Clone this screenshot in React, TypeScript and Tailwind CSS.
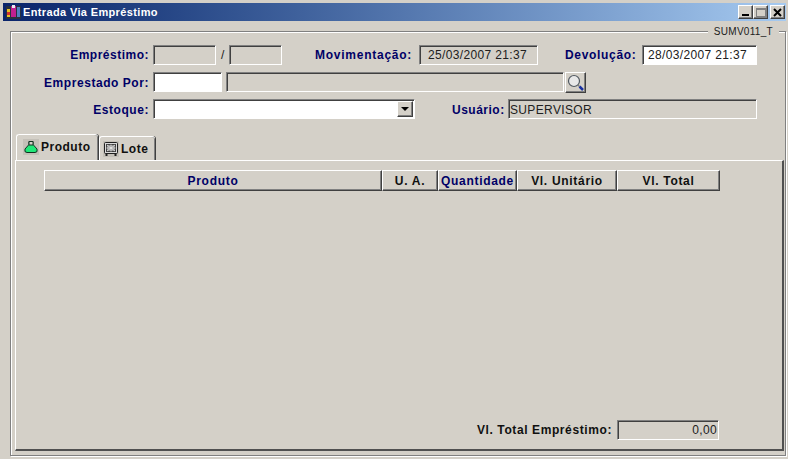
import React from "react";

const sunken =
  "border border-t-[#808080] border-l-[#808080] border-b-white border-r-white shadow-[inset_1px_1px_0_#404040]";
const raised =
  "border border-t-white border-l-white border-b-[#404040] border-r-[#404040] shadow-[inset_-1px_-1px_0_#808080]";

function Label({ width, children }: { width: string; children: React.ReactNode }) {
  return (
    <span className={`${width} shrink-0 whitespace-nowrap text-right text-[12px] font-bold leading-[14px] text-[#000066]`}>
      {children}
    </span>
  );
}

function Field({ className, children }: { className: string; children?: React.ReactNode }) {
  return (
    <div className={`${sunken} ${className} flex shrink-0 items-center overflow-hidden whitespace-nowrap pl-[3px] text-[12px] tracking-[0.35px] text-[#202020]`}>
      {children}
    </div>
  );
}

function HeaderCell({ width, blue, children }: { width: string; blue?: boolean; children: React.ReactNode }) {
  return (
    <div
      className={`${raised} ${width} flex h-[21px] shrink-0 items-center justify-center whitespace-nowrap text-[12px] font-bold tracking-[0.7px] ${
        blue ? "text-[#000066]" : "text-[#101010]"
      }`}
    >
      {children}
    </div>
  );
}

function WinButton({ children }: { children: React.ReactNode }) {
  return (
    <div className={`${raised} flex h-[14px] w-[15px] items-center justify-center bg-[#d4d0c8]`}>{children}</div>
  );
}

export default function App() {
  return (
    <div className="flex h-[459px] w-[788px] flex-col overflow-hidden bg-[#d4d0c8] pt-[3px] pl-[2px] font-['Liberation_Sans',sans-serif]">
      <div className="ml-px mr-[2px] flex h-[18px] shrink-0 items-center justify-between bg-gradient-to-r from-[#0a246a] to-[#a6caf0] pl-[3px] pr-[1px]">
        <div className="flex items-center gap-[2px]">
          <svg width="15" height="16" viewBox="0 0 15 16">
            <rect x="0" y="2" width="15" height="13" fill="#283040" />
            <rect x="1" y="5" width="3" height="8" fill="#e8c020" />
            <rect x="1" y="8" width="3" height="3" fill="#d03030" />
            <rect x="5" y="2" width="5" height="11" fill="#c02090" />
            <rect x="6" y="1" width="3" height="3" fill="#e8e8f0" />
            <rect x="11" y="3" width="3" height="10" fill="#5080c0" />
          </svg>
          <span className="text-[11px] font-bold leading-none tracking-[0.36px] text-white">Entrada Via Empréstimo</span>
        </div>
        <div className="flex">
          <WinButton>
            <span className="mt-[6px] h-[2px] w-[7px] bg-black" />
          </WinButton>
          <WinButton>
            <span className="h-[9px] w-[10px] border border-t-2 border-[#808080]" />
          </WinButton>
          <div className="ml-[2px]">
            <WinButton>
              <svg width="9" height="9" viewBox="0 0 9 9">
                <path d="M1 1L8 8M8 1L1 8" stroke="#000" strokeWidth="2" />
              </svg>
            </WinButton>
          </div>
        </div>
      </div>

      <div className="relative ml-2 mr-[2px] mt-[10px] h-[425px] border border-[#808080] shadow-[inset_1px_1px_0_#fff,1px_1px_0_#fff]">
        <span className="absolute right-[6px] top-[-6px] bg-[#d4d0c8] px-[6px] text-[10px] leading-[12px] tracking-[0.3px] text-[#202020]">
          SUMV011_T
        </span>

        <div className="flex flex-col pt-[13px]">
          <div className="flex h-[20px] items-center">
            <Label width="w-[138px] tracking-[0.5px]">Empréstimo:</Label>
            <Field className="ml-1 h-[20px] w-[63px]" />
            <span className="ml-[5px] w-[8px] text-[12px] text-[#202020]">/</span>
            <Field className="h-[20px] w-[53px]" />
            <Label width="ml-[33px] w-[97px] tracking-[0.75px]">Movimentação:</Label>
            <Field className="ml-[7px] h-[20px] w-[119px]">
              <span className="pl-[5px]">25/03/2007 21:37</span>
            </Field>
            <Label width="ml-[27px] w-[71px] tracking-[0.68px]">Devolução:</Label>
            <Field className="ml-[6px] h-[20px] w-[115px] bg-white">
              <span className="pl-[2px]">28/03/2007 21:37</span>
            </Field>
          </div>

          <div className="mt-[7px] flex h-[21px] items-start">
            <div className="flex h-[20px] items-center pt-px">
              <Label width="w-[138px] tracking-[0.55px]">Emprestado Por:</Label>
            </div>
            <Field className="ml-1 h-[20px] w-[69px] bg-white" />
            <Field className="ml-1 h-[20px] w-[338px]" />
            <button className={`${raised} ml-px flex h-[21px] w-[21px] items-center justify-center bg-[#d4d0c8]`}>
              <svg width="19" height="19" viewBox="0 0 19 19">
                <circle cx="8" cy="8" r="5.5" fill="#e8e8e8" stroke="#505860" strokeWidth="1.2" />
                <path d="M12 12L13.5 13.5" stroke="#808080" strokeWidth="1.5" />
                <path d="M13.5 13.5L17 17" stroke="#1830a0" strokeWidth="2.5" />
              </svg>
            </button>
          </div>

          <div className="mt-[6px] flex h-[20px] items-center">
            <Label width="w-[138px] pt-px tracking-[0.55px]">Estoque:</Label>
            <Field className="relative ml-1 h-[20px] w-[262px] bg-white">
              <div className={`${raised} absolute right-px top-px flex h-[16px] w-[16px] items-center justify-center bg-[#d4d0c8]`}>
                <span className="h-0 w-0 border-x-[4px] border-t-[4px] border-x-transparent border-t-black" />
              </div>
            </Field>
            <Label width="ml-[37px] w-[52px] pt-px pr-[1px] tracking-[0.5px]">Usuário:</Label>
            <Field className="ml-1 h-[20px] w-[249px] !pl-[1px]">
              <span className="pt-px">SUPERVISOR</span>
            </Field>
          </div>
        </div>

        <div className="relative z-10 ml-[5px] mt-[15px] flex h-[26px] items-end">
          <div className="flex h-[26px] w-[82px] items-center gap-[2px] rounded-t-[3px] border-l border-t border-white bg-[#d4d0c8] pb-[2px] pl-[6px] shadow-[inset_-1px_0_0_#808080,1px_0_0_#404040]">
            <svg width="16" height="16" viewBox="0 0 16 16" className="bg-[#c4c0b8]">
              <path d="M6 2.5H10V5.5L14 10Q15 13.5 12 13.5H4Q1 13.5 2 10L6 5.5Z" fill="#20e878" stroke="#103020" />
              <path d="M6 2.5H10V6H6Z" fill="#d4d0c8" stroke="#103020" />
            </svg>
            <span className="text-[12px] font-bold tracking-[0.5px] text-[#101010]">Produto</span>
          </div>
          <div className="ml-px flex h-[24px] w-[56px] items-center gap-[2px] rounded-t-[3px] border-l border-t border-white pl-[3px] shadow-[inset_-1px_0_0_#808080,1px_0_0_#404040]">
            <svg width="16" height="16" viewBox="0 0 16 16" className="bg-[#c4c0b8]">
              <rect x="1.5" y="1.5" width="13" height="11" rx="1" fill="#d8d8d8" stroke="#202020" />
              <rect x="3.5" y="3.5" width="9" height="7" fill="#909090" stroke="#404040" />
              <path d="M4 4L12 10M12 4L4 10M8 3.5V10.5M3.5 7H12.5" stroke="#e8e8e8" strokeWidth="0.8" />
              <path d="M3.5 12.5V15M12.5 12.5V15" stroke="#202020" strokeWidth="2" />
            </svg>
            <span className="text-[12px] font-bold tracking-[0.5px] text-[#101010]">Lote</span>
          </div>
        </div>

        <div className="relative ml-[4px] mr-[1px] flex h-[291px] flex-col border-l border-t border-b-2 border-r-2 border-t-white border-l-white border-b-[#505050] border-r-[#505050]">
          <div className="ml-[28px] mt-[9px] flex">
            <HeaderCell width="w-[338px]" blue>Produto</HeaderCell>
            <HeaderCell width="w-[56px]">U. A.</HeaderCell>
            <HeaderCell width="w-[79px]" blue>Quantidade</HeaderCell>
            <HeaderCell width="w-[100px]">Vl. Unitário</HeaderCell>
            <HeaderCell width="w-[103px]">Vl. Total</HeaderCell>
          </div>
          <div className="mt-auto mb-[9px] mr-[63px] flex items-center justify-end gap-[5px]">
            <span className="text-[12px] font-bold tracking-[0.6px] text-[#101010]">Vl. Total Empréstimo:</span>
            <Field className="h-[20px] w-[102px] justify-end pr-[1px]">0,00</Field>
          </div>
        </div>
      </div>
    </div>
  );
}
